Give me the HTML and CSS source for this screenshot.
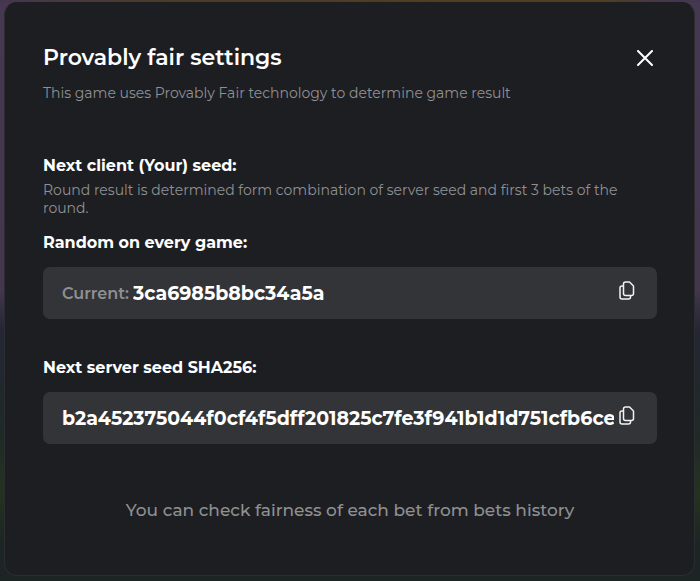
FILE: index.html
```
<!DOCTYPE html>
<html lang="en">
<head>
    <meta charset="UTF-8"/>
    <title>Provably fair settings</title>
    <link rel="stylesheet" href="styles.css">
</head>
<body>
<div class="modal" role="dialog" aria-labelledby="modalTitle">
    <div class="header">
        <h1 class="title" id="modalTitle">Provably fair settings</h1>
        <button class="iconBtn" type="button" aria-label="Close">
            <svg width="16" height="16" viewBox="0 0 16 16">
                <path d="M1 1L15 15M15 1L1 15" fill="none" stroke="#fff" stroke-width="2" stroke-linecap="round"/>
            </svg>
        </button>
    </div>
    <p class="note">This game uses Provably Fair technology to determine game result</p>

    <h2 class="label section">Next client (Your) seed:</h2>
    <p class="note">Round result is determined form combination of server seed and first 3 bets of the round.</p>

    <h2 class="label">Random on every game:</h2>
    <div class="field">
        <label class="prefix" for="clientSeed">Current:</label>
        <input class="ipt" id="clientSeed" type="text" value="3ca6985b8bc34a5a" readonly/>
        <button class="iconBtn copy" type="button" aria-label="Copy client seed">
            <svg width="16" height="20" viewBox="0 0 16 20">
                <path d="M6.5 1H10.5L14.5 5V12.5Q14.5 14.5 12.5 14.5H6.5Q4.5 14.5 4.5 12.5V3Q4.5 1 6.5 1Z" fill="none" stroke="#f2f2f3" stroke-width="1.5" stroke-linejoin="round"/>
                <path d="M4.5 5H3Q1 5 1 7V16Q1 18 3 18H9.5Q11.5 18 11.5 16V14.5" fill="none" stroke="#f2f2f3" stroke-width="1.5"/>
            </svg>
        </button>
    </div>

    <h2 class="label"><label for="serverSeed">Next server seed SHA256:</label></h2>
    <div class="field">
        <input class="ipt" id="serverSeed" type="text" value="b2a452375044f0cf4f5dff201825c7fe3f941b1d1d751cfb6ce2" readonly/>
        <button class="iconBtn copy" type="button" aria-label="Copy server seed">
            <svg width="16" height="20" viewBox="0 0 16 20">
                <path d="M6.5 1H10.5L14.5 5V12.5Q14.5 14.5 12.5 14.5H6.5Q4.5 14.5 4.5 12.5V3Q4.5 1 6.5 1Z" fill="none" stroke="#f2f2f3" stroke-width="1.5" stroke-linejoin="round"/>
                <path d="M4.5 5H3Q1 5 1 7V16Q1 18 3 18H9.5Q11.5 18 11.5 16V14.5" fill="none" stroke="#f2f2f3" stroke-width="1.5"/>
            </svg>
        </button>
    </div>

    <p class="footer">You can check fairness of each bet from bets history</p>
</div>
</body>
</html>
```

FILE: styles.css
```
* {
    box-sizing: border-box;
}

body {
    margin: 0;
    padding: 2px 5px 5px 4px;
    min-height: 100vh;
    display: flex;
    font-family: Montserrat, Inter, sans-serif;
    color: #fff;
    /* dimmed game screen behind the dialog */
    background:
        linear-gradient(90deg, #43364f 0%, #4b3b2a 22%, #4f4020 70%, #4f4020 86%, #43364f 96%) top / 100% 3px no-repeat,
        linear-gradient(180deg, #453850 0%, #43364d 50%, #232634 57%, #1f2a26 75%, #24331f 85%, #1c2424 94%);
}

.modal {
    flex: 1;
    padding: 39px 37px 24px 38px;
    background-color: #1d1e22;
    border: 1px solid #2b2e30;
    border-top-color: #1d1e22;
    border-radius: 13px;
}

.header {
    display: flex;
    align-items: center;
    justify-content: space-between;
    padding-right: 4px;
    margin-bottom: 10px;
}

.title {
    margin: 0;
    font-size: 22px;
    line-height: 32px;
    font-weight: 600;
}

.note {
    margin: 0;
    font-size: 14px;
    line-height: 18px;
    color: #909194;
}

.label {
    margin: 13px 0 11px;
    font-size: 16px;
    line-height: 26px;
    font-weight: 700;
}

.section {
    margin: 51px 0 2px;
}

.field {
    display: flex;
    align-items: center;
    height: 52px;
    margin-bottom: 36px;
    padding: 0 22px 0 19px;
    border-radius: 7px;
    background-color: #333437;
}

.prefix {
    margin-right: 4px;
    font-size: 16px;
    font-weight: 600;
    color: #8f9092;
}

.ipt {
    flex: 1;
    min-width: 0;
    padding: 0;
    border: 0;
    outline: 0;
    background: none;
    color: #fff;
    font-family: inherit;
    font-size: 19px;
    font-weight: 700;
}

.iconBtn {
    display: flex;
    padding: 0;
    border: 0;
    background: none;
    cursor: pointer;
}

.copy {
    margin: 0 0 5px 5px;
}

.footer {
    margin: 54px 0 0;
    font-size: 17px;
    line-height: 24px;
    font-weight: 500;
    text-align: center;
    color: #8f9092;
}
```
